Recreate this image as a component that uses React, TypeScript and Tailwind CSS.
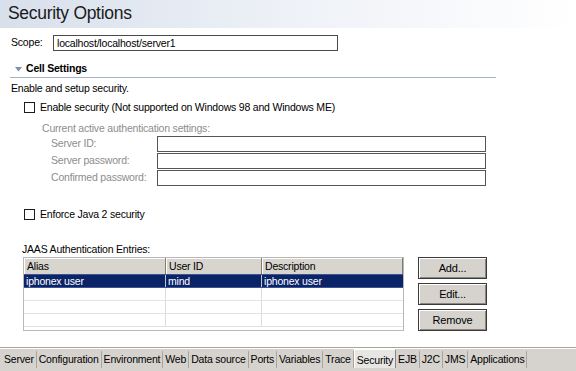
import React from 'react'

const TABS = [
  'Server',
  'Configuration',
  'Environment',
  'Web',
  'Data source',
  'Ports',
  'Variables',
  'Trace',
  'Security',
  'EJB',
  'J2C',
  'JMS',
  'Applications',
]

const AUTH_FIELDS = ['Server ID:', 'Server password:', 'Confirmed password:']

function Checkbox({ label }: { label: string }) {
  return (
    <div className="flex items-center gap-[5px]">
      <span className="w-[11px] h-[11px] border border-[#1c1c1c] bg-white shrink-0" />
      <span>{label}</span>
    </div>
  )
}

function Button({ label }: { label: string }) {
  return (
    <button className="w-[69px] h-[22px] bg-[#d6d3ce] border border-[#3a3a3a] shadow-[inset_1px_1px_0_#ffffff,inset_-1px_-1px_0_#8a8780] text-[11px] tracking-[-0.2px] text-black">
      {label}
    </button>
  )
}

export default function App() {
  return (
    <div
      className="w-[576px] h-[371px] bg-white flex flex-col overflow-hidden text-[10.5px] tracking-[-0.2px] text-black"
      style={{ fontFamily: 'Tahoma, "Liberation Sans", Arial, sans-serif' }}
    >
      {/* Header */}
      <div className="h-[28px] shrink-0 bg-gradient-to-r from-[#d8e0ec] via-[#eef1f7] to-white pl-[8px] flex items-center">
        <h1 className="text-[17.5px] tracking-[-0.3px] leading-none text-[#1a1a1a]">Security Options</h1>
      </div>

      {/* Scope */}
      <div className="flex items-center pl-[11px] mt-[7px] h-[16px]">
        <span className="w-[42px]">Scope:</span>
        <div className="w-[285px] h-[16px] border border-[#4a4a4a] pl-[3px] leading-[14px]">
          localhost/localhost/server1
        </div>
      </div>

      {/* Cell settings section */}
      <div className="ml-[10px] w-[486px] mt-[10px] border-b border-[#a6b2c8] h-[17px] flex items-center gap-[4px] pl-[5px]">
        <svg width="7" height="5" viewBox="0 0 7 5">
          <path d="M0 0h7L3.5 4.5z" fill="#7d90b4" />
        </svg>
        <span className="font-bold">Cell Settings</span>
      </div>

      <div className="pl-[11px] mt-[3px] h-[14px]">Enable and setup security.</div>

      <div className="pl-[24px] mt-[6px] h-[13px] flex items-center">
        <Checkbox label="Enable security (Not supported on Windows 98 and Windows ME)" />
      </div>

      <div className="pl-[42px] mt-[7px] text-[#8d8d8d] h-[13px]">Current active authentication settings:</div>

      <div className="flex flex-col mt-[2px] gap-[1px]">
        {AUTH_FIELDS.map((f) => (
          <div key={f} className="flex items-center h-[16px]">
            <span className="pl-[51px] w-[157px] text-[#8d8d8d]">{f}</span>
            <div className="w-[329px] h-[16px] border border-[#555555]" />
          </div>
        ))}
      </div>

      <div className="pl-[24px] mt-[22px] h-[13px] flex items-center">
        <Checkbox label="Enforce Java 2 security" />
      </div>

      <div className="pl-[22px] mt-[21px] h-[13px]">JAAS Authentication Entries:</div>

      {/* Table + buttons */}
      <div className="flex mt-[2px] pl-[23px]">
        <div className="w-[381px] h-[74px] border border-[#b8b8b8] bg-white flex flex-col">
          <div className="grid grid-cols-[142px_96px_1fr] h-[16px] bg-[#d8d5cf]">
            {['Alias', 'User ID', 'Description'].map((h) => (
              <div
                key={h}
                className="pl-[3px] leading-[16px] border-r border-[#7e7c77] shadow-[inset_1px_1px_0_#ffffff]"
              >
                {h}
              </div>
            ))}
          </div>
          <div className="grid grid-cols-[142px_96px_1fr] h-[14px] bg-[#0b2468] text-white leading-[12px] border-y border-[#3c5494]">
            <div className="pl-[2px] border-r border-[#c7c7c7]">iphonex user</div>
            <div className="pl-[2px] border-r border-[#c7c7c7]">mind</div>
            <div className="pl-[2px]">iphonex user</div>
          </div>
          {[0, 1, 2].map((i) => (
            <div key={i} className="grid grid-cols-[142px_96px_1fr] h-[13px] border-b border-[#e2e2e2]">
              <div className="border-r border-[#dcdcdc]" />
              <div className="border-r border-[#dcdcdc]" />
              <div />
            </div>
          ))}
        </div>
        <div className="flex flex-col gap-[4px] ml-[14px]">
          <Button label="Add..." />
          <Button label="Edit..." />
          <Button label="Remove" />
        </div>
      </div>

      {/* Tab bar */}
      <div className="mt-auto h-[24px] bg-[#d6d3ce] border-t border-[#a8a59e] shadow-[inset_0_1px_0_#ffffff] flex items-start pl-[2px] pt-[3px]">
        {TABS.map((t) => (
          <div
            key={t}
            className={
              t === 'Security'
                ? 'h-[19px] px-[2px] leading-[17px] bg-[#e8e6e2] border-x border-t border-[#ffffff] border-r-[#8a8780] -mt-[2px] pt-[2px]'
                : 'h-[17px] px-[2px] leading-[17px] border-r border-[#a8a59e]'
            }
          >
            {t}
          </div>
        ))}
      </div>
    </div>
  )
}
